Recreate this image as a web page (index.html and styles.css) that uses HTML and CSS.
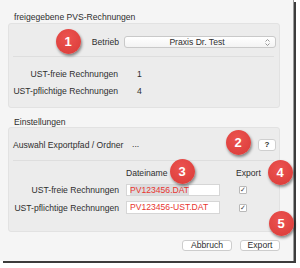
FILE: index.html
```html
<!DOCTYPE html>
<html lang="de">
<head>
<meta charset="utf-8">
<title>PVS Export</title>
<link rel="stylesheet" href="styles.css">
</head>
<body>
<div class="window">
  <div class="section-title">freigegebene PVS-Rechnungen</div>
  <div class="box box-one">
    <div class="row betrieb-row">
      <span class="label betrieb-label">Betrieb</span>
      <div class="select">
        <span class="select-text">Praxis Dr. Test</span>
        <svg class="select-arrows" width="7" height="9" viewBox="0 0 7 9"><path d="M1.5 3.5 L3.5 1.5 L5.5 3.5 M1.5 5.5 L3.5 7.5 L5.5 5.5" fill="none" stroke="#8a8a8a" stroke-width="0.9"/></svg>
      </div>
    </div>
    <div class="sep"></div>
    <div class="row count-row first-count">
      <span class="label count-label">UST-freie Rechnungen</span>
      <span class="count-value">1</span>
    </div>
    <div class="row count-row">
      <span class="label count-label">UST-pflichtige Rechnungen</span>
      <span class="count-value">4</span>
    </div>
  </div>

  <div class="section-title second">Einstellungen</div>
  <div class="box box-two">
    <div class="row path-row">
      <span class="path-label">Auswahl Exportpfad / Ordner</span>
      <span class="dots">...</span>
      <span class="help-btn">?</span>
    </div>
    <div class="sep sep-two"></div>
    <div class="row head-row">
      <span class="head-name">Dateiname</span>
      <span class="head-export">Export</span>
    </div>
    <div class="row file-row">
      <span class="label file-label">UST-freie Rechnungen</span>
      <span class="field"><span class="selected">PV123456.DAT</span></span>
      <span class="check">✓</span>
    </div>
    <div class="row file-row second-file">
      <span class="label file-label">UST-pflichtige Rechnungen</span>
      <span class="field">PV123456-UST.DAT</span>
      <span class="check">✓</span>
    </div>
  </div>

  <div class="buttons">
    <span class="btn btn-cancel">Abbruch</span>
    <span class="btn btn-export">Export</span>
  </div>

  <span class="badge b1">1</span>
  <span class="badge b2">2</span>
  <span class="badge b3">3</span>
  <span class="badge b4">4</span>
  <span class="badge b5">5</span>
</div>
</body>
</html>
```

FILE: styles.css
```css
html, body {
  margin: 0;
  padding: 0;
  background: #ffffff;
}

body {
  width: 300px;
  height: 268px;
  overflow: hidden;
  font-family: "Liberation Sans", Arial, sans-serif;
  font-size: 8.6px;
  color: #2e2e2e;
}

.window {
  position: relative;
  box-sizing: border-box;
  width: 293px;
  height: 261px;
  padding: 11px 13px 0 8px;
  background: #f5f5f5;
  box-shadow: 1px 0 0 #9a9a9a, 3px 2px 0 #3c3c3c;
}

.section-title {
  height: 12px;
  line-height: 12px;
  padding-left: 6px;
}

.section-title.second {
  margin-top: 9px;
  height: 10px;
  line-height: 10px;
}

.box {
  box-sizing: border-box;
  width: 272px;
  background: #ececec;
  border: 1px solid #e2e2e2;
  border-radius: 3px;
}

.box-one {
  height: 85px;
  padding-top: 12px;
}

.box-two {
  height: 105px;
  padding-top: 11px;
}

.row {
  display: flex;
  align-items: center;
}

.label {
  flex: none;
  box-sizing: border-box;
  text-align: right;
}

.betrieb-row {
  height: 12px;
}

.betrieb-label {
  width: 110px;
}

.select {
  position: relative;
  box-sizing: border-box;
  flex: none;
  margin-left: 5px;
  width: 152px;
  height: 12px;
  background: linear-gradient(#ffffff, #f3f3f3);
  border: 1px solid #c9c9c9;
  border-radius: 3px;
  display: flex;
  align-items: center;
  justify-content: center;
  padding-right: 6px;
}

.select-text {
  line-height: 10px;
}

.select-arrows {
  position: absolute;
  right: 4px;
  top: 1px;
}

.sep {
  height: 1px;
  background: #dedede;
  margin: 8px 5px 0 4px;
}

.count-row {
  height: 17px;
}

.first-count {
  margin-top: 8px;
}

.count-label {
  width: 109px;
}

.count-value {
  margin-left: 19px;
}

.path-row {
  height: 12px;
  padding-left: 4px;
}

.path-label {
  flex: none;
  width: 119px;
}

.dots {
  flex: none;
  line-height: 9px;
  align-self: flex-start;
  padding-top: 1px;
}

.help-btn {
  box-sizing: border-box;
  flex: none;
  margin-left: auto;
  margin-right: 3px;
  width: 18px;
  height: 12px;
  line-height: 10px;
  text-align: center;
  font-size: 8px;
  font-weight: bold;
  background: #ffffff;
  border: 1px solid #cfcfcf;
  border-radius: 3px;
}

.sep-two {
  margin-top: 9px;
}

.head-row {
  margin-top: 6px;
  height: 12px;
}

.head-name {
  flex: none;
  margin-left: 117px;
  width: 110px;
}

.file-row {
  margin-top: 5px;
  height: 12px;
}

.second-file {
  height: 13px;
}

.file-label {
  width: 110px;
}

.field {
  box-sizing: border-box;
  flex: none;
  margin-left: 7px;
  width: 94px;
  height: 100%;
  background: #ffffff;
  border: 1px solid #d6d6d6;
  color: #e8352f;
  padding-left: 3px;
  line-height: 10px;
  white-space: nowrap;
}

.selected {
  background: #dcdcde;
}

.check {
  box-sizing: border-box;
  flex: none;
  margin-left: 19px;
  width: 8px;
  height: 8px;
  background: #ffffff;
  border: 1px solid #b9b9b9;
  border-radius: 1px;
  font-size: 7px;
  line-height: 6px;
  text-align: center;
  color: #444;
}

.buttons {
  display: flex;
  justify-content: flex-end;
  gap: 8px;
  margin-top: 8px;
  width: 272px;
}

.btn {
  box-sizing: border-box;
  height: 11px;
  line-height: 9px;
  text-align: center;
  background: #ffffff;
  border: 1px solid #cdcdcd;
  border-radius: 3px;
}

.btn-cancel {
  width: 50px;
}

.btn-export {
  width: 40px;
}

.badge {
  position: absolute;
  width: 25px;
  height: 25px;
  margin: -12.5px 0 0 -12.5px;
  border-radius: 50%;
  background: radial-gradient(circle at 45% 35%, #ec5350, #d93a37);
  color: #ffffff;
  font-weight: bold;
  font-size: 13px;
  line-height: 25px;
  text-align: center;
  box-shadow: 1px 2px 3px rgba(0, 0, 0, 0.45);
}

.b1 { left: 68px; top: 41px; }
.b2 { left: 238px; top: 142px; }
.b3 { left: 182px; top: 171px; }
.b4 { left: 280px; top: 172px; }
.b5 { left: 281px; top: 223px; }
```
